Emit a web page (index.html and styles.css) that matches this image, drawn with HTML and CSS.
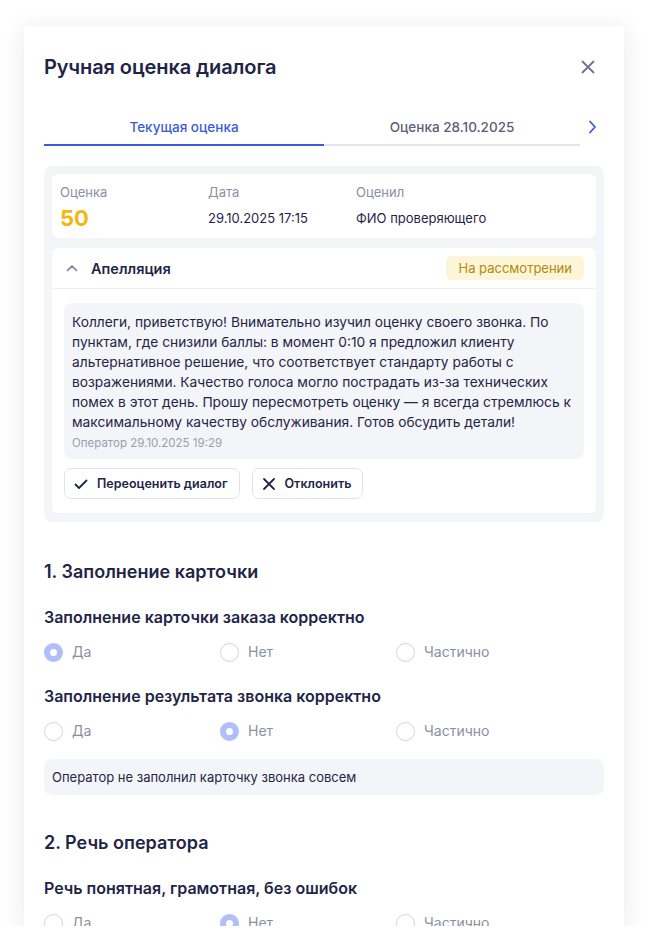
FILE: index.html
```html
<!DOCTYPE html>
<html lang="ru">
<head>
  <meta charset="UTF-8">
  <meta name="viewport" content="width=device-width, initial-scale=1.0">
  <title>Ручная оценка диалога</title>
  <link rel="stylesheet" href="styles.css">
</head>
<body>
<div class="modal">
  <div class="modal-head">
    <h1 class="modal-title">Ручная оценка диалога</h1>
    <button type="button" class="close-btn" aria-label="Закрыть">
      <svg width="14" height="14" viewBox="0 0 14 14"><path d="M1.5 1.5l11 11M12.5 1.5l-11 11" stroke="#6f7489" stroke-width="1.8" stroke-linecap="round"/></svg>
    </button>
  </div>

  <div class="tabs">
    <div class="tab active">Текущая оценка</div>
    <div class="tab second">Оценка 28.10.2025</div>
    <div class="tab-next">
      <svg width="10" height="14" viewBox="0 0 10 14"><path d="M3 1.5l5 5.5-5 5.5" fill="none" stroke="#3b5bdb" stroke-width="1.8" stroke-linecap="round" stroke-linejoin="round"/></svg>
    </div>
  </div>

  <div class="review">
    <div class="review-info">
      <div class="info-col">
        <span class="info-label">Оценка</span>
        <span class="info-score">50</span>
      </div>
      <div class="info-col">
        <span class="info-label">Дата</span>
        <span class="info-value">29.10.2025 17:15</span>
      </div>
      <div class="info-col">
        <span class="info-label">Оценил</span>
        <span class="info-value">ФИО проверяющего</span>
      </div>
    </div>

    <div class="appeal">
      <div class="appeal-head">
        <div class="appeal-title">
          <svg width="12" height="8" viewBox="0 0 12 8"><path d="M1.5 6.5l4.5-4.5 4.5 4.5" fill="none" stroke="#7a7f95" stroke-width="1.6" stroke-linecap="round" stroke-linejoin="round"/></svg>
          <span>Апелляция</span>
        </div>
        <span class="badge">На рассмотрении</span>
      </div>
      <div class="appeal-body">
        <div class="appeal-msg">
          <p>Коллеги, приветствую! Внимательно изучил оценку своего звонка. По пунктам, где снизили баллы: в момент 0:10 я предложил клиенту альтернативное решение, что соответствует стандарту работы с возражениями. Качество голоса могло пострадать из-за технических помех в этот день. Прошу пересмотреть оценку — я всегда стремлюсь к максимальному качеству обслуживания. Готов обсудить детали!</p>
          <div class="appeal-meta">Оператор 29.10.2025 19:29</div>
        </div>
        <div class="appeal-actions">
          <button type="button" class="btn">
            <svg width="14" height="14" viewBox="0 0 14 14"><path d="M1.5 7.5l3.5 3.5 7.5-7.5" fill="none" stroke="#1f2547" stroke-width="1.8" stroke-linecap="round" stroke-linejoin="round"/></svg>
            Переоценить диалог
          </button>
          <button type="button" class="btn">
            <svg width="14" height="14" viewBox="0 0 14 14"><path d="M2 2l10 10M12 2L2 12" stroke="#1f2547" stroke-width="1.8" stroke-linecap="round"/></svg>
            Отклонить
          </button>
        </div>
      </div>
    </div>
  </div>

  <div class="section">
    <h2 class="section-title">1. Заполнение карточки</h2>

    <div class="question">
      <div class="question-title">Заполнение карточки заказа корректно</div>
      <div class="radios">
        <label class="radio checked"><span class="dot"></span>Да</label>
        <label class="radio"><span class="dot"></span>Нет</label>
        <label class="radio"><span class="dot"></span>Частично</label>
      </div>
    </div>

    <div class="question">
      <div class="question-title">Заполнение результата звонка корректно</div>
      <div class="radios">
        <label class="radio"><span class="dot"></span>Да</label>
        <label class="radio checked"><span class="dot"></span>Нет</label>
        <label class="radio"><span class="dot"></span>Частично</label>
      </div>
      <div class="comment">Оператор не заполнил карточку звонка совсем</div>
    </div>
  </div>

  <div class="section">
    <h2 class="section-title">2. Речь оператора</h2>

    <div class="question">
      <div class="question-title">Речь понятная, грамотная, без ошибок</div>
      <div class="radios">
        <label class="radio"><span class="dot"></span>Да</label>
        <label class="radio checked"><span class="dot"></span>Нет</label>
        <label class="radio"><span class="dot"></span>Частично</label>
      </div>
    </div>
  </div>
</div>
</body>
</html>
```

FILE: styles.css
```css
body {
  margin: 0;
  background: #fff;
  font-family: Inter, "Noto Sans", sans-serif;
  color: #1f2547;
}

.modal {
  box-sizing: border-box;
  width: 600px;
  height: 900px;
  margin: 26px 0 0 24px;
  padding: 0 20px;
  background: #fff;
  overflow: hidden;
  box-shadow: 0 4px 24px rgba(25, 30, 60, 0.10);
}

.modal-head {
  display: flex;
  justify-content: space-between;
  align-items: center;
  padding-top: 27px;
}

.modal-title {
  margin: 0;
  font-size: 20px;
  line-height: 28px;
  font-weight: 600;
  letter-spacing: -0.1px;
  color: #1f2547;
}

.close-btn {
  border: none;
  background: none;
  padding: 0;
  margin-right: 9px;
  display: flex;
}

/* tabs */
.tabs {
  display: flex;
  align-items: center;
  margin-top: 27px;
}

.tab {
  padding: 9px 0 7px;
  font-size: 13.5px;
  line-height: 20px;
  font-weight: 500;
  text-align: center;
  color: #5c6078;
  border-bottom: 2px solid #e3e6ef;
}

.tab.active {
  width: 280px;
  color: #3b5bdb;
  border-bottom-color: #3b5bdb;
}

.tab.second {
  width: 256px;
}

.tab-next {
  margin-left: auto;
  margin-right: 7px;
  display: flex;
}

/* review box */
.review {
  margin-top: 20px;
  margin-bottom: 2px;
  padding: 8px 8px 9px;
  background: #f4f5f8;
  border-radius: 8px;
  display: flex;
  flex-direction: column;
  gap: 10px;
}

.review-info {
  display: grid;
  grid-template-columns: 148px 148px 1fr;
  padding: 9px 8px 7px;
  background: #fff;
  border-radius: 6px;
}

.info-col {
  display: flex;
  flex-direction: column;
}

.info-label {
  font-size: 13px;
  line-height: 18px;
  color: #8a8fa3;
}

.info-value {
  margin-top: 4px;
  font-size: 13px;
  line-height: 26px;
  color: #1f2547;
}

.info-score {
  margin-top: 4px;
  font-size: 22px;
  line-height: 26px;
  font-weight: 700;
  color: #f5b50f;
}

.appeal {
  background: #fff;
  border-radius: 6px;
}

.appeal-head {
  display: flex;
  justify-content: space-between;
  align-items: center;
  padding: 8px 12px 8px 14px;
  border-bottom: 1px solid #eef0f4;
}

.appeal-title {
  display: flex;
  align-items: center;
  gap: 13px;
  font-size: 14.5px;
  font-weight: 600;
}

.badge {
  padding: 0 12px;
  line-height: 24px;
  font-size: 13px;
  color: #b08a0c;
  background: #fdf5d8;
  border-radius: 6px;
}

.appeal-body {
  padding: 14px 12px 14px;
}

.appeal-msg {
  padding: 9px 8px 8px;
  background: #f4f5f8;
  border-radius: 8px;
}

.appeal-msg p {
  margin: 0;
  font-size: 13.75px;
  line-height: 20px;
  color: #1f2547;
}

.appeal-meta {
  margin-top: 3px;
  font-size: 11.5px;
  line-height: 16px;
  color: #9a9eb0;
}

.appeal-actions {
  display: flex;
  gap: 12px;
  margin-top: 9px;
}

.btn {
  display: flex;
  align-items: center;
  gap: 9px;
  height: 31px;
  padding: 0 11px 0 9px;
  background: #fff;
  border: 1.5px solid #e1e3eb;
  border-radius: 7px;
  font-family: inherit;
  font-size: 12.5px;
  font-weight: 600;
  color: #1f2547;
}

/* questions */
.section {
  padding-top: 36px;
}

.section-title {
  margin: 0;
  font-size: 18px;
  line-height: 24px;
  font-weight: 600;
  color: #1f2547;
}

.question {
  margin-top: 22px;
}

.question + .question {
  margin-top: 23px;
}

.question-title {
  font-size: 16px;
  line-height: 22px;
  font-weight: 600;
  color: #1f2547;
}

.radios {
  display: grid;
  grid-template-columns: 176px 176px 1fr;
  margin-top: 14px;
}

.radio {
  display: flex;
  align-items: center;
  gap: 9px;
  font-size: 14px;
  line-height: 20px;
  color: #8a8fa3;
}

.dot {
  box-sizing: border-box;
  width: 19px;
  height: 19px;
  border-radius: 50%;
  border: 1.5px solid #cfd4e2;
}

.radio.checked .dot {
  border: 6px solid #b0bffa;
  background: #fff;
}

.comment {
  margin-top: 18px;
  padding: 0 8px;
  line-height: 36px;
  font-size: 13px;
  background: #f4f5f8;
  border-radius: 8px;
  color: #1f2547;
}
```
